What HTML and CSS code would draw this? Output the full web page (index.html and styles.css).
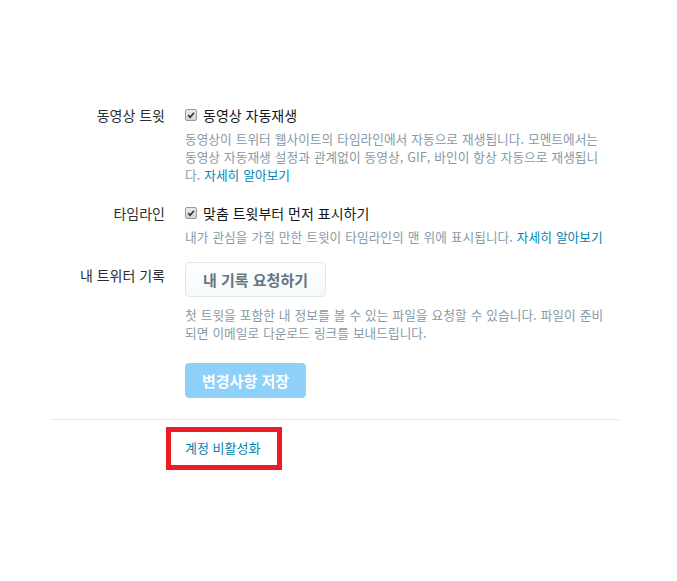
FILE: index.html
```html
<!DOCTYPE html>
<html lang="ko">
<head>
<meta charset="utf-8">
<title>설정</title>
<link rel="stylesheet" href="styles.css">
</head>
<body>
<div class="settings">
  <div class="row">
    <div class="label">동영상 트윗</div>
    <div class="controls">
      <label class="check">
        <span class="box"><svg width="12" height="12" viewBox="0 0 12 12"><path d="M2.6 6.2 L4.9 8.7 L9.6 3.2" fill="none" stroke="#333" stroke-width="2"/></svg></span>
        동영상 자동재생
      </label>
      <p class="desc">동영상이 트위터 웹사이트의 타임라인에서 자동으로 재생됩니다. 모멘트에서는 동영상 자동재생 설정과 관계없이 동영상, GIF, 바인이 항상 자동으로 재생됩니다. <a href="#" class="link">자세히 알아보기</a></p>
    </div>
  </div>
  <div class="row">
    <div class="label">타임라인</div>
    <div class="controls">
      <label class="check">
        <span class="box"><svg width="12" height="12" viewBox="0 0 12 12"><path d="M2.6 6.2 L4.9 8.7 L9.6 3.2" fill="none" stroke="#333" stroke-width="2"/></svg></span>
        맞춤 트윗부터 먼저 표시하기
      </label>
      <p class="desc">내가 관심을 가질 만한 트윗이 타임라인의 맨 위에 표시됩니다. <a href="#" class="link">자세히 알아보기</a></p>
    </div>
  </div>
  <div class="row">
    <div class="label">내 트위터 기록</div>
    <div class="controls">
      <button class="btn">내 기록 요청하기</button>
      <p class="desc desc-gap">첫 트윗을 포함한 내 정보를 볼 수 있는 파일을 요청할 수 있습니다. 파일이 준비되면 이메일로 다운로드 링크를 보내드립니다.</p>
    </div>
  </div>
  <div class="row actions">
    <div class="label"></div>
    <div class="controls">
      <button class="btn-primary">변경사항 저장</button>
    </div>
  </div>
  <hr class="divider">
  <div class="row">
    <div class="label"></div>
    <div class="controls">
      <div class="highlight"><a href="#" class="link deactivate">계정 비활성화</a></div>
    </div>
  </div>
</div>
</body>
</html>
```
FILE: styles.css
```css
html, body {
  margin: 0;
  padding: 0;
  background: #fff;
}
body {
  font-family: "Noto Sans CJK KR", "Liberation Sans", sans-serif;
  color: #292f33;
}
.settings {
  width: 570px;
  margin-left: 50px;
  padding-top: 102px;
}
.row {
  display: flex;
  margin-bottom: 16px;
}
.label {
  width: 115px;
  flex: none;
  margin-right: 20px;
  text-align: right;
  font-size: 14px;
  line-height: 26px;
  color: #292f33;
}
.controls {
  width: 424px;
}
.check {
  display: flex;
  align-items: center;
  font-size: 14px;
  line-height: 26px;
  color: #14171a;
}
.box {
  width: 10px;
  height: 10px;
  border: 1px solid #9a9a9a;
  border-radius: 2px;
  background: linear-gradient(#ececec, #d4d4d4);
  margin-right: 6px;
  display: flex;
  align-items: center;
  justify-content: center;
  box-sizing: content-box;
}
.box svg {
  width: 10px;
  height: 10px;
}
.desc {
  margin: 2px 0 0;
  font-size: 12.7px;
  word-spacing: 0.5px;
  line-height: 18px;
  color: #8899a6;
}
.desc-gap {
  margin-top: 9px;
}
.link {
  color: #0084b4;
  text-decoration: none;
}
.btn {
  height: 35px;
  padding: 0 17px;
  font-family: inherit;
  font-size: 15px;
  font-weight: bold;
  color: #66757f;
  background: linear-gradient(#fff, #f5f8fa);
  border: 1px solid #e1e8ed;
  border-radius: 4px;
  display: block;
}
.actions {
  margin-top: 21px;
  margin-bottom: 21px;
}
.btn-primary {
  height: 35px;
  padding: 0 16px;
  font-family: inherit;
  font-size: 15px;
  font-weight: bold;
  color: #fff;
  background: #8ed0f9;
  border: 1px solid #8ed0f9;
  border-radius: 4px;
  display: block;
}
.divider {
  border: 0;
  border-top: 1px solid #e6ecf0;
  margin: 0 0 7px;
  height: 0;
}
.highlight {
  display: inline-block;
  border: 5px solid #ed1c24;
  margin-left: -19px;
  padding: 6px 17px 7px 14px;
}
.deactivate {
  display: block;
  font-size: 13px;
  line-height: 20px;
}
```
